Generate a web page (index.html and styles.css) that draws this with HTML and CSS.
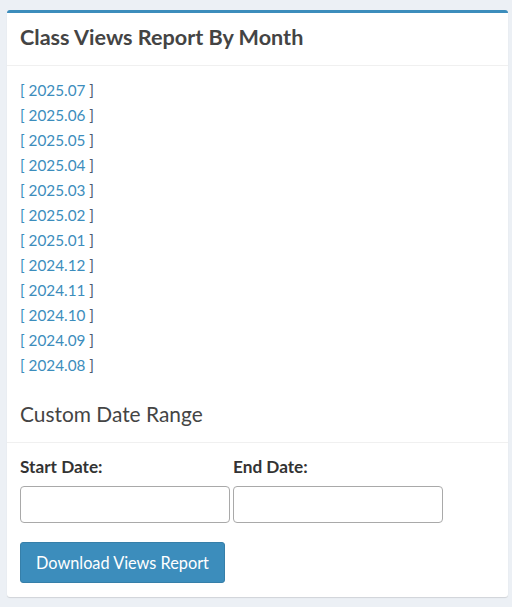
FILE: index.html
```html
<!DOCTYPE html>
<html>
<head>
<meta charset="utf-8">
<link rel="stylesheet" href="styles.css">
</head>
<body>
<div class="box">
  <div class="box-header">
    <h3 class="box-title">Class Views Report By Month</h3>
  </div>
  <div class="box-body months">
    <div class="month"><a href="#">[ 2025.07 </a><span class="close">]</span></div>
    <div class="month"><a href="#">[ 2025.06 </a><span class="close">]</span></div>
    <div class="month"><a href="#">[ 2025.05 </a><span class="close">]</span></div>
    <div class="month"><a href="#">[ 2025.04 </a><span class="close">]</span></div>
    <div class="month"><a href="#">[ 2025.03 </a><span class="close">]</span></div>
    <div class="month"><a href="#">[ 2025.02 </a><span class="close">]</span></div>
    <div class="month"><a href="#">[ 2025.01 </a><span class="close">]</span></div>
    <div class="month"><a href="#">[ 2024.12 </a><span class="close">]</span></div>
    <div class="month"><a href="#">[ 2024.11 </a><span class="close">]</span></div>
    <div class="month"><a href="#">[ 2024.10 </a><span class="close">]</span></div>
    <div class="month"><a href="#">[ 2024.09 </a><span class="close">]</span></div>
    <div class="month"><a href="#">[ 2024.08 </a><span class="close">]</span></div>
  </div>
  <div class="box-header sub">
    <h3 class="sub-title">Custom Date Range</h3>
  </div>
  <div class="box-body form">
    <div class="fields">
      <div class="field">
        <label class="label">Start Date:</label>
        <input class="input" type="text">
      </div>
      <div class="field">
        <label class="label">End Date:</label>
        <input class="input" type="text">
      </div>
    </div>
    <button class="btn" type="button">Download Views Report</button>
  </div>
</div>
</body>
</html>
```
FILE: styles.css
```css
* { box-sizing: border-box; }
html, body {
  margin: 0;
  background: #ecf0f5;
}
body {
  padding: 10px 4px 10px 7px;
  font-family: Lato, "Liberation Sans", sans-serif;
  color: #333;
}
.box {
  background: #fff;
  border-top: 3px solid #3c8dbc;
  border-radius: 3px;
  box-shadow: 0 1px 1px rgba(0,0,0,0.12);
  height: 587px;
}
.box-header {
  border-bottom: 1px solid #f0f0f0;
  padding: 10px 13px 14px;
}
.box-title {
  margin: 0;
  font-size: 21.6px;
  line-height: 28px;
  font-weight: 700;
  color: #444;
}
.months {
  padding: 12px 13px 9px;
  display: flex;
  flex-direction: column;
  align-items: flex-start;
}
.month {
  font-size: 15.3px;
  line-height: 25px;
}
.month a {
  color: #3c8dbc;
  text-decoration: none;
}
.month .close {
  color: #4a5a70;
}
.sub {
  padding: 13px 13px 14px;
}
.sub-title {
  margin: 0;
  font-size: 20.9px;
  line-height: 28px;
  font-weight: 400;
  color: #444;
}
.form {
  padding: 14px 13px 14px;
}
.fields {
  display: grid;
  grid-template-columns: 213px 213px;
}
.field {
  display: flex;
  flex-direction: column;
  align-items: flex-start;
}
.label {
  font-size: 17.2px;
  line-height: 20px;
  font-weight: 700;
  color: #333;
  margin-bottom: 9px;
}
.input {
  width: 210px;
  height: 37px;
  border: 1px solid #a9a9a9;
  border-radius: 4px;
  background: #fff;
  margin: 0;
  font: inherit;
}
.btn {
  margin-top: 19px;
  width: 205px;
  height: 41px;
  background: #3c8dbc;
  border: 1px solid #367fa9;
  border-radius: 3px;
  color: #fff;
  font-family: Lato, "Liberation Sans", sans-serif;
  font-size: 16.3px;
  padding: 0;
  white-space: nowrap;
  text-align: center;
}
```
